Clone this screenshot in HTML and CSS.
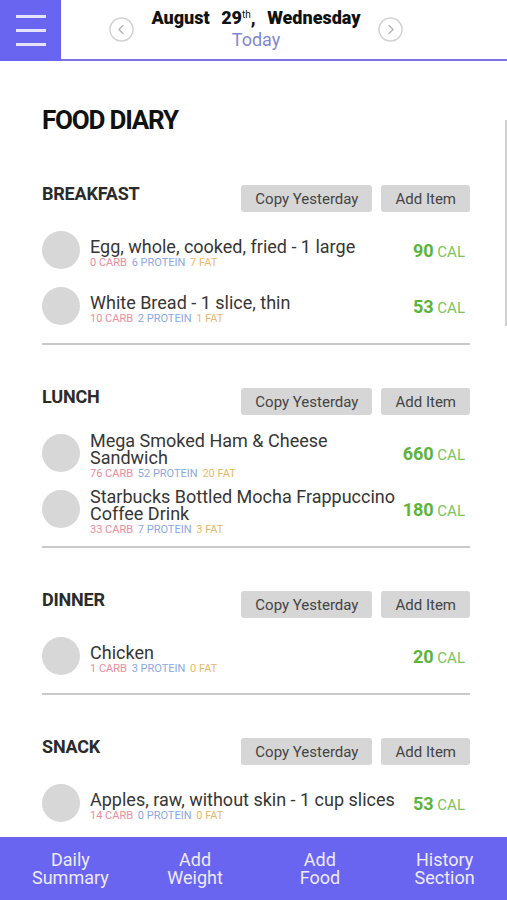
FILE: index.html
```html
<!DOCTYPE html>
<html lang="en">

<head>
  <meta charset="UTF-8">
  <title>Food Diary</title>
  <link rel="stylesheet" href="styles.css">
</head>

<body>
  <header class="topbar">
    <button type="button" class="menu-btn"><span></span><span></span><span></span></button>
    <div class="date-nav">
      <span class="arrow">
        <svg width="25" height="25" viewBox="0 0 25 25"><circle cx="12.5" cy="12.5" r="11.5" fill="none" stroke="#d2d2d2" stroke-width="1.5"/><path d="M14 8.5 L10 12.5 L14 16.5" fill="none" stroke="#b4b4b4" stroke-width="1.5" stroke-linecap="round" stroke-linejoin="round"/></svg>
      </span>
      <div class="date-text">
        <div class="date-main">August 29<sup>th</sup>, Wednesday</div>
        <div class="date-sub">Today</div>
      </div>
      <span class="arrow">
        <svg width="25" height="25" viewBox="0 0 25 25"><circle cx="12.5" cy="12.5" r="11.5" fill="none" stroke="#d2d2d2" stroke-width="1.5"/><path d="M11 8.5 L15 12.5 L11 16.5" fill="none" stroke="#b4b4b4" stroke-width="1.5" stroke-linecap="round" stroke-linejoin="round"/></svg>
      </span>
    </div>
  </header>

  <main class="diario">
    <h1 class="titulo">FOOD DIARY</h1>

    <section class="comida">
      <div class="comida-cabecera">
        <h2>BREAKFAST</h2>
        <div class="botones">
          <button type="button" class="btn">Copy Yesterday</button>
          <button type="button" class="btn">Add Item</button>
        </div>
      </div>
      <div class="lista">
        <div class="fila">
          <span class="avatar"></span>
          <div class="info">
            <div class="nombre">Egg, whole, cooked, fried - 1 large</div>
            <div class="macros"><span class="carb">0 CARB</span> <span class="prot">6 PROTEIN</span> <span class="fat">7 FAT</span></div>
          </div>
          <div class="cal"><b>90</b> CAL</div>
        </div>
        <div class="fila">
          <span class="avatar"></span>
          <div class="info">
            <div class="nombre">White Bread - 1 slice, thin</div>
            <div class="macros"><span class="carb">10 CARB</span> <span class="prot">2 PROTEIN</span> <span class="fat">1 FAT</span></div>
          </div>
          <div class="cal"><b>53</b> CAL</div>
        </div>
      </div>
      <hr class="separador">
    </section>

    <section class="comida">
      <div class="comida-cabecera">
        <h2>LUNCH</h2>
        <div class="botones">
          <button type="button" class="btn">Copy Yesterday</button>
          <button type="button" class="btn">Add Item</button>
        </div>
      </div>
      <div class="lista">
        <div class="fila">
          <span class="avatar"></span>
          <div class="info">
            <div class="nombre">Mega Smoked Ham &amp; Cheese Sandwich</div>
            <div class="macros"><span class="carb">76 CARB</span> <span class="prot">52 PROTEIN</span> <span class="fat">20 FAT</span></div>
          </div>
          <div class="cal"><b>660</b> CAL</div>
        </div>
        <div class="fila">
          <span class="avatar"></span>
          <div class="info">
            <div class="nombre">Starbucks Bottled Mocha Frappuccino Coffee Drink</div>
            <div class="macros"><span class="carb">33 CARB</span> <span class="prot">7 PROTEIN</span> <span class="fat">3 FAT</span></div>
          </div>
          <div class="cal"><b>180</b> CAL</div>
        </div>
      </div>
      <hr class="separador">
    </section>

    <section class="comida">
      <div class="comida-cabecera">
        <h2>DINNER</h2>
        <div class="botones">
          <button type="button" class="btn">Copy Yesterday</button>
          <button type="button" class="btn">Add Item</button>
        </div>
      </div>
      <div class="lista">
        <div class="fila">
          <span class="avatar"></span>
          <div class="info">
            <div class="nombre">Chicken</div>
            <div class="macros"><span class="carb">1 CARB</span> <span class="prot">3 PROTEIN</span> <span class="fat">0 FAT</span></div>
          </div>
          <div class="cal"><b>20</b> CAL</div>
        </div>
      </div>
      <hr class="separador">
    </section>

    <section class="comida">
      <div class="comida-cabecera">
        <h2>SNACK</h2>
        <div class="botones">
          <button type="button" class="btn">Copy Yesterday</button>
          <button type="button" class="btn">Add Item</button>
        </div>
      </div>
      <div class="lista">
        <div class="fila">
          <span class="avatar"></span>
          <div class="info">
            <div class="nombre">Apples, raw, without skin - 1 cup slices</div>
            <div class="macros"><span class="carb">14 CARB</span> <span class="prot">0 PROTEIN</span> <span class="fat">0 FAT</span></div>
          </div>
          <div class="cal"><b>53</b> CAL</div>
        </div>
      </div>
      <hr class="separador">
    </section>
  </main>

  <div class="scroll-thumb"></div>

  <nav class="tabs">
    <a class="tab">Daily<br>Summary</a>
    <a class="tab">Add<br>Weight</a>
    <a class="tab">Add<br>Food</a>
    <a class="tab">History<br>Section</a>
  </nav>
</body>

</html>
```

FILE: styles.css
```css
body {
  margin: 0;
  font-family: Roboto, "Liberation Sans", sans-serif;
  background-color: #fff;
  color: #333;
}

.topbar {
  display: flex;
  height: 61px;
}

.menu-btn {
  width: 61px;
  height: 61px;
  border: none;
  padding: 0;
  background-color: #6a65f0;
  display: flex;
  flex-direction: column;
  align-items: center;
  justify-content: center;
  gap: 11px;
}

.menu-btn span {
  display: block;
  width: 30px;
  height: 3px;
  background-color: #e4e2fb;
}

.date-nav {
  flex: 1;
  display: flex;
  align-items: center;
  padding-left: 48px;
  border-bottom: 2px solid #7a75e2;
}

.arrow {
  width: 25px;
  height: 25px;
  display: flex;
}

.date-text {
  width: 244px;
  text-align: center;
  margin-top: -2px;
}

.date-main {
  font-size: 18px;
  font-weight: 900;
  line-height: 22px;
  color: #111;
  word-spacing: 7px;
}

.date-main sup {
  font-size: 10px;
  font-weight: 400;
  vertical-align: 6px;
  line-height: 0;
  word-spacing: 0;
}

.date-sub {
  font-size: 18px;
  line-height: 22px;
  color: #8088d2;
}

.diario {
  padding: 0 37px 90px 42px;
}

.titulo {
  margin: 44px 0 0;
  font-size: 26px;
  line-height: 30px;
  font-weight: 700;
  color: #111;
  letter-spacing: -1.2px;
}

.comida {
  margin-top: 43px;
}

.titulo + .comida {
  margin-top: 50px;
}

.comida-cabecera {
  display: flex;
  justify-content: space-between;
  align-items: flex-start;
}

.comida-cabecera h2 {
  margin: 0;
  font-size: 18px;
  line-height: 18px;
  font-weight: 700;
  color: #2b2b2b;
  letter-spacing: -0.2px;
}

.botones {
  display: flex;
  gap: 9px;
}

.btn {
  height: 27px;
  padding: 0 14px;
  border: none;
  border-radius: 3px;
  background-color: #d6d6d6;
  color: #444;
  font-family: Roboto, "Liberation Sans", sans-serif;
  font-size: 15px;
}

.lista {
  margin-top: 10px;
}

.fila {
  display: flex;
  align-items: center;
  min-height: 56px;
}

.avatar {
  flex: none;
  width: 38px;
  height: 38px;
  border-radius: 50%;
  background-color: #d7d7d7;
  margin-right: 10px;
}

.info {
  flex: 1;
  padding-top: 6px;
}

.nombre {
  font-size: 18px;
  line-height: 17px;
  color: #363636;
}

.macros {
  font-size: 11px;
  line-height: 13px;
  margin-top: 1px;
}

.macros span {
  margin-right: 2px;
}

.carb {
  color: #ec8c9e;
}

.prot {
  color: #8ca8e4;
}

.fat {
  color: #e8b86a;
}

.cal {
  flex: none;
  margin-left: 6px;
  padding-right: 5px;
  font-size: 15px;
  color: #7cc35c;
  white-space: nowrap;
}

.cal b {
  font-size: 18px;
  color: #5cb43b;
}

.separador {
  margin: 9px 0 0;
  height: 2px;
  border: none;
  background-color: #c9c9c9;
}

.scroll-thumb {
  position: fixed;
  right: 0;
  top: 120px;
  width: 2px;
  height: 206px;
  background-color: #d0d0d0;
}

.tabs {
  position: fixed;
  left: 0;
  right: 0;
  bottom: 0;
  height: 63px;
  padding-left: 8px;
  background-color: #6a65f0;
  display: grid;
  grid-template-columns: repeat(4, 1fr);
  align-items: center;
}

.tab {
  text-align: center;
  font-size: 18px;
  line-height: 18px;
  color: #ecebfd;
}
```
